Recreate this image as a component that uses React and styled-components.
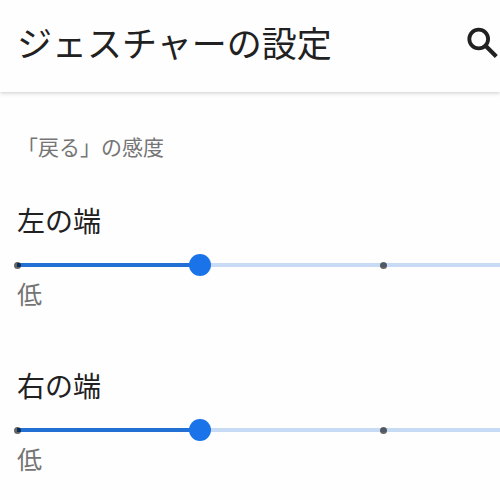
import { useState } from "react";
import styled, { createGlobalStyle } from "styled-components";

const GlobalStyle = createGlobalStyle`
    * {
        box-sizing: border-box;
    }

    body {
        margin: 0;
        background-color: #fefefe;
        color: #212121;
        font-family: "Noto Sans CJK JP", sans-serif;
    }
`;

const Page = styled.div`
    min-height: 100vh;
    overflow: hidden;
`;

const Header = styled.header`
    display: flex;
    align-items: center;
    justify-content: space-between;
    height: 92px;
    padding: 0 0 8px 17px;
    background-color: #fefefe;
    box-shadow: 0 1px 4px rgba(0, 0, 0, 0.2);
`;

const Title = styled.h1`
    margin: 0;
    font-size: 35px;
    font-weight: 400;
    line-height: 52px;
    white-space: nowrap;
`;

const SearchButton = styled.button`
    display: flex;
    flex: none;
    padding: 0;
    border: none;
    background: none;
    color: #212121;
    cursor: pointer;
`;

const Content = styled.main`
    padding: 39px 0 0 17px;
`;

const SectionTitle = styled.h2`
    margin: 0 0 39px;
    color: #757575;
    font-size: 21px;
    font-weight: 400;
    line-height: 30px;
`;

const Setting = styled.section`
    display: flex;
    flex-direction: column;

    & + & {
        margin-top: 57px;
    }
`;

const Label = styled.label`
    font-size: 28px;
    line-height: 40px;
`;

const Slider = styled.div`
    position: relative;
    display: flex;
    align-items: center;
    width: calc(100% + 67px);
    height: 22px;
    margin: 14px 0 2px;
`;

const Track = styled.div`
    flex: 1;
    height: 4px;
    background-color: #c8dbf4;
`;

const Progress = styled.div`
    height: 100%;
    background-color: #2270d4;
`;

const Ticks = styled.div`
    position: absolute;
    inset: 0 -3px;
    display: flex;
    align-items: center;
    justify-content: space-between;
`;

const Tick = styled.span`
    width: 7px;
    height: 7px;
    border-radius: 50%;
    background-color: rgba(0, 0, 0, 0.6);
`;

/* wider than the track by one thumb, so the thumb centers on the ticks */
const Range = styled.input`
    position: absolute;
    inset: 0 -11px;
    width: calc(100% + 22px);
    height: 22px;
    margin: 0;
    appearance: none;
    background: none;
    cursor: pointer;

    &::-webkit-slider-thumb {
        appearance: none;
        width: 22px;
        height: 22px;
        border: none;
        border-radius: 50%;
        background-color: #1a73e8;
    }

    &::-moz-range-thumb {
        width: 22px;
        height: 22px;
        border: none;
        border-radius: 50%;
        background-color: #1a73e8;
    }
`;

const Caption = styled.span`
    color: #757575;
    font-size: 25px;
    line-height: 30px;
`;

const STEPS = 3;

const SensitivitySlider = ({ id, label }) => {
  const [value, setValue] = useState(1);

  return (
    <Setting>
        <Label htmlFor={id}>{label}</Label>
        <Slider>
            <Track>
                <Progress style={{ width: `${(value / STEPS) * 100}%` }} />
            </Track>
            <Ticks>
                {Array.from({ length: STEPS + 1 }, (_, i) => <Tick key={i} />)}
            </Ticks>
            <Range
                id={id}
                type="range"
                min="0"
                max={STEPS}
                value={value}
                onChange={(e) => setValue(Number(e.target.value))}
            />
        </Slider>
        <Caption>低</Caption>
    </Setting>
  )
}

const App = () => {
  return (
    <Page>
        <GlobalStyle />
        <Header>
            <Title>ジェスチャーの設定</Title>
            <SearchButton aria-label="検索">
                <svg width="34" height="34" viewBox="0 0 34 34" fill="none" stroke="currentColor">
                    <circle cx="12.7" cy="14" r="9.4" strokeWidth="3.8" />
                    <path d="M19.3 20.6L30.3 31.6" strokeWidth="4.2" />
                </svg>
            </SearchButton>
        </Header>
        <Content>
            <SectionTitle>「戻る」の感度</SectionTitle>
            <SensitivitySlider id="left-edge" label="左の端" />
            <SensitivitySlider id="right-edge" label="右の端" />
        </Content>
    </Page>
  )
}

export default App
